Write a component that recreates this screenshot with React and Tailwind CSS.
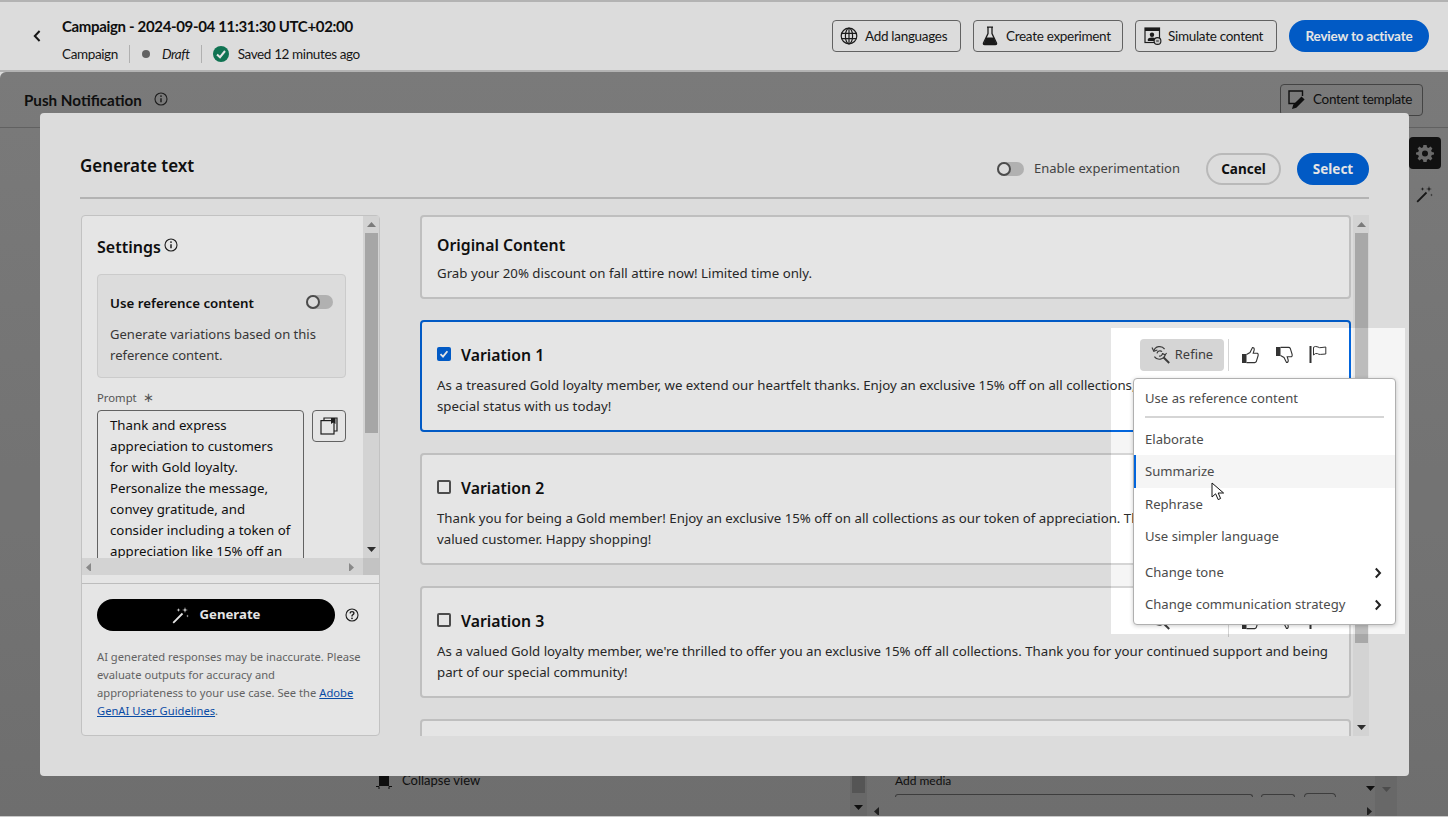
import React from "react";

const Globe = () => (
  <svg width="18" height="18" viewBox="0 0 18 18" fill="none" stroke="#1f1f1f" strokeWidth="1.2">
    <circle cx="9" cy="9" r="7.8" />
    <ellipse cx="9" cy="9" rx="3.6" ry="7.8" />
    <path d="M9 1.2V16.8M1.6 6.3H16.4M1.6 11.7H16.4" />
  </svg>
);
const Flask = () => (
  <svg width="16" height="20" viewBox="0 0 16 20">
    <path d="M5 1.2H11M6 1.5V7.5L1.5 17Q1 18.6 2.6 18.6H13.4Q15 18.6 14.5 17L10 7.5V1.5" fill="none" stroke="#1f1f1f" strokeWidth="1.3" />
    <path d="M4.2 11.5H11.8L14.6 18.6H1.4Z" fill="#1f1f1f" />
  </svg>
);
const Simulate = () => (
  <svg width="18" height="18" viewBox="0 0 18 18" fill="none">
    <rect x="1" y="1" width="14.5" height="14.5" stroke="#1f1f1f" strokeWidth="1.2" />
    <rect x="1" y="1" width="14.5" height="3" fill="#1f1f1f" />
    <circle cx="8" cy="7.8" r="2.2" fill="#1f1f1f" />
    <path d="M3.8 14V12.6Q4 10.8 8 10.6Q10.6 10.7 11.3 11.5L11 14Z" fill="#1f1f1f" />
    <circle cx="13.5" cy="14" r="3.4" fill="#dfdfdf" stroke="#1f1f1f" strokeWidth="1.1" />
    <path d="M12.2 14H14.8" stroke="#1f1f1f" />
  </svg>
);
const TemplateIcon = () => (
  <svg width="18" height="20" viewBox="0 0 18 20" fill="none">
    <path d="M9 13.5H1V1H14.5V6" stroke="#111" strokeWidth="1.4" />
    <path d="M4 19L5.2 14.8L13.5 6.5L16.6 9.6L8.3 17.8Z" fill="#111" />
  </svg>
);
const Info = ({ size = 14, color = "#222" }) => (
  <svg width={size} height={size} viewBox="0 0 14 14" fill="none" stroke={color} strokeWidth="1.1">
    <circle cx="7" cy="7" r="6" />
    <path d="M7 6.2V10.2" strokeWidth="1.5" />
    <circle cx="7" cy="4.1" r="0.9" fill={color} stroke="none" />
  </svg>
);
const Help = () => (
  <svg width="14" height="14" viewBox="0 0 14 14" fill="none" stroke="#222" strokeWidth="1.1">
    <circle cx="7" cy="7" r="6" />
    <path d="M5.1 5.4Q5.2 3.6 7 3.6Q8.9 3.6 8.9 5.2Q8.9 6.2 7.6 6.9Q7 7.2 7 8.4" strokeWidth="1.4" />
    <circle cx="7" cy="10.3" r="0.9" fill="#222" stroke="none" />
  </svg>
);
const Wand = ({ color = "#fff", size = 18 }) => (
  <svg width={size} height={size} viewBox="0 0 18 18" fill="none">
    <path d="M1.2 16.8L10.5 7.5" stroke={color} strokeWidth="1.8" />
    <path d="M13 1L13.6 3.4L16 4L13.6 4.6L13 7L12.4 4.6L10 4L12.4 3.4Z M6.5 2L6.9 3.6L8.5 4L6.9 4.4L6.5 6L6.1 4.4L4.5 4L6.1 3.6Z M15.5 8.5L15.8 9.7L17 10L15.8 10.3L15.5 11.5L15.2 10.3L14 10L15.2 9.7Z" fill={color} />
  </svg>
);
const Gear = () => (
  <svg width="18" height="18" viewBox="0 0 18 18">
    <path fillRule="evenodd" d="M7.4 1H10.6L11 3.2L12.6 3.9L14.5 2.6L16.4 4.5L15.1 6.4L15.8 8L18 8.4V10.6L15.8 11L15.1 12.6L16.4 14.5L14.5 16.4L12.6 15.1L11 15.8L10.6 18H7.4L7 15.8L5.4 15.1L3.5 16.4L1.6 14.5L2.9 12.6L2.2 11L0 10.6V8.4L2.2 8L2.9 6.4L1.6 4.5L3.5 2.6L5.4 3.9L7 3.2Z M9 6.4A3 3 0 1 0 9 12.4A3 3 0 1 0 9 6.4Z" fill="#777" />
  </svg>
);
const CopyDoc = () => (
  <svg width="18" height="18" viewBox="0 0 18 18" fill="none" stroke="#222" strokeWidth="1.2">
    <path d="M4 3.5V1H17V14H14" />
    <rect x="1" y="3.6" width="13" height="13.4" />
    <path d="M11 1H15.5V7L13.2 5.4L11 7Z" fill="#222" stroke="none" />
  </svg>
);
const RefineIcon = () => (
  <svg width="20" height="20" viewBox="0 0 20 20" fill="none" stroke="#3d3d3d" strokeWidth="1.2">
    <path d="M2.8 6.2A6 6 0 0 1 13.6 4.2" />
    <path d="M14.2 9.6A6 6 0 0 1 3.4 11.6" />
    <path d="M1 2.6L2.8 6.2L6.4 5M15.6 8L14.2 9.8L11.4 8.6" />
    <path d="M12.4 12.2L18.2 18" strokeWidth="2" />
    <path d="M6 8.4A3 3 0 0 1 11 6.6M11.6 8A3 3 0 0 1 8 11" />
  </svg>
);
const ThumbUp = () => (
  <svg width="18" height="18" viewBox="0 0 18 18" fill="none">
    <rect x="1" y="8" width="4.5" height="9" fill="#333" />
    <path d="M5.5 8.5L9 6.5L11.5 1.5Q13.5 1.5 13.2 4L12.2 7.3H16.4Q17.6 8 17 10L15.2 15.8Q14.8 16.6 13.6 16.6H5.5" stroke="#333" strokeWidth="1.1" />
  </svg>
);
const ThumbDown = () => (
  <svg width="18" height="18" viewBox="0 0 18 18" fill="none">
    <rect x="1" y="1" width="4.5" height="9" fill="#333" />
    <path d="M5.5 1.4H13.6Q14.8 1.4 15.2 2.2L17 8Q17.6 10 16.4 10.7H12.2L13.2 14Q13.5 16.5 11.5 16.5L9 11.5L5.5 9.5" stroke="#333" strokeWidth="1.1" />
  </svg>
);
const FlagIcon = () => (
  <svg width="18" height="20" viewBox="0 0 18 20" fill="none">
    <rect x="0.5" y="1" width="2" height="17" fill="#333" />
    <path d="M4.5 10V2.2Q6.5 0.8 9 2Q10.5 3 12 2.6L16.8 2V9L11.5 9.4Q9.8 9.6 8.5 8.6Q6.5 7.8 4.5 10Z" stroke="#333" strokeWidth="1" />
  </svg>
);
const Cursor = () => (
  <svg width="14" height="19" viewBox="0 0 14 19">
    <path d="M1 1V15L4.6 11.8L7.2 17.6L9.6 16.5L7.2 11H12.6Z" fill="#fff" stroke="#111" strokeWidth="1" />
  </svg>
);
const Chevron = () => (
  <svg width="8" height="12" viewBox="0 0 8 12" fill="none">
    <path d="M1.8 1.5L6 6L1.8 10.5" stroke="#222" strokeWidth="2" />
  </svg>
);
const Arrow = ({ d = "up", c = "#555" }) => {
  const p = { up: "M4.5 1L9 6H0Z", down: "M0 1H9L4.5 6Z", left: "M6 0V9L1 4.5Z", right: "M1 0V9L6 4.5Z" }[d];
  return (
    <svg width="9" height="9" viewBox="0 0 9 7">
      <path d={p} fill={c} />
    </svg>
  );
};

const OutlineBtn = ({ icon, children, cls }) => (
  <button className={`flex h-8 items-center rounded border border-[#6e6e6e] text-[13.5px] tracking-[-0.3px] text-[#1a1a1a] ${cls}`}>
    {icon}
    <span>{children}</span>
  </button>
);

const Toggle = () => (
  <span className="relative inline-block h-[14px] w-[27px] shrink-0 rounded-full bg-[#c6c6c6]">
    <span className="absolute left-0 top-0 h-[14px] w-[14px] rounded-full border-2 border-[#555] bg-[#f5f5f5]" />
  </span>
);

const Actions = ({ active }) => (
  <div className="flex items-center">
    <div className={`flex h-8 w-[84px] items-center justify-center gap-[4px] rounded ${active ? "bg-[#d5d5d5]" : ""}`}>
      <RefineIcon />
      <span className="text-[12.9px] text-[#3d3d3d]">Refine</span>
    </div>
    <div className="ml-[4px] h-8 w-px bg-[#d5d5d5]" />
    <div className="ml-[12px] flex w-[86px] items-center gap-[16px]">
      <ThumbUp />
      <ThumbDown />
      <FlagIcon />
    </div>
  </div>
);

const Variation = ({ title, lines, selected }) => (
  <div className={`h-[112px] shrink-0 rounded border-2 bg-white pl-[15px] pr-[22px] pt-[17px] ${selected ? "border-[#0265dc]" : "border-[#d5d5d5]"}`}>
    <div className="flex h-8 items-center justify-between">
      <div className="flex items-center gap-[10px]">
        {selected ? (
          <span className="-mt-[3px] flex h-[14px] w-[14px] items-center justify-center rounded-[2px] bg-[#0265dc]">
            <svg width="10" height="10" viewBox="0 0 10 10" fill="none">
              <path d="M1.5 5.2L4 7.6L8.4 2.2" stroke="#fff" strokeWidth="1.8" />
            </svg>
          </span>
        ) : (
          <span className="-mt-[3px] h-[14px] w-[14px] rounded-[2px] border-2 border-[#555]" />
        )}
        <span className="pt-[2px] text-[15.8px] font-semibold text-[#111]">{title}</span>
      </div>
      <Actions active={selected} />
    </div>
    <div className="mt-[4px] text-[13.25px] leading-[21px] text-[#2c2c2c]">
      {lines.map((l) => (
        <div key={l} className="whitespace-nowrap">{l}</div>
      ))}
    </div>
  </div>
);

const MenuItem = ({ children, h, hover, chevron }) => (
  <div className={`flex items-center justify-between pr-[13px] text-[13.1px] text-[#4b4b4b] ${h} ${hover ? "border-l-2 border-[#0265dc] bg-[#f5f5f5] pl-[9px]" : "pl-[11px] pt-[2px]"}`}>
    <span>{children}</span>
    {chevron && <Chevron />}
  </div>
);

export default function App() {
  return (
    <div className="relative flex h-[817px] w-full flex-col overflow-hidden bg-[#f5f5f5] font-['Noto_Sans',sans-serif]">
      {/* top bar */}
      <header className="flex h-[72px] shrink-0 items-center justify-between border-t-2 border-b-2 border-[#c8c8c8] bg-[#f5f5f5] pl-[32px] pr-[19px] font-['Lato',sans-serif]">
        <div className="flex items-center">
          <svg width="10" height="14" viewBox="0 0 10 14" fill="none">
            <path d="M7.6 2L2.8 7L7.6 12" stroke="#1a1a1a" strokeWidth="2" />
          </svg>
          <div className="ml-5 mt-[8px]">
            <div className="text-[15px] font-bold leading-5 tracking-[-0.34px] text-[#111]">Campaign - 2024-09-04 11:31:30 UTC+02:00</div>
            <div className="mt-[8px] flex h-[20px] items-center text-[13.5px] tracking-[-0.38px] text-[#1a1a1a]">
              <span>Campaign</span>
              <span className="mx-[11px] h-[18px] w-px bg-[#c4c4c4]" />
              <span className="ml-[1px] h-2 w-2 rounded-full bg-[#6e6e6e]" />
              <span className="ml-3 italic">Draft</span>
              <span className="mx-[11px] h-[18px] w-px bg-[#c4c4c4]" />
              <svg width="16" height="16" viewBox="0 0 16 16">
                <circle cx="8" cy="8" r="8" fill="#12805c" />
                <path d="M4 8.4L7 11.2L12 5" stroke="#fff" strokeWidth="2" fill="none" />
              </svg>
              <span className="ml-[9px]">Saved 12 minutes ago</span>
            </div>
          </div>
        </div>
        <div className="flex items-center gap-3">
          <OutlineBtn icon={<Globe />} cls="w-[129px] gap-[7px] pl-[7px]">Add languages</OutlineBtn>
          <OutlineBtn icon={<Flask />} cls="w-[150px] gap-[8px] pl-[8px]">Create experiment</OutlineBtn>
          <OutlineBtn icon={<Simulate />} cls="w-[142px] gap-[6px] pl-[8px]">Simulate content</OutlineBtn>
          <button className="h-8 w-[140px] rounded-full bg-[#0265dc] text-[13.5px] font-bold tracking-[-0.2px] text-white">Review to activate</button>
        </div>
      </header>

      {/* page behind the dialog */}
      <main className="flex min-h-0 flex-1 flex-col rounded-tl-md border-b border-[#e0e0e0] bg-gradient-to-b from-[#888888] to-[#7b7b7b] font-['Lato',sans-serif]">
        <div className="flex h-[56px] shrink-0 items-center justify-between border-b border-[#6d6d6d] pl-6 pr-[25px]">
          <div className="flex items-center gap-[12px]">
            <span className="pt-[2px] text-[15.2px] font-bold text-[#111]">Push Notification</span>
            <Info />
          </div>
          <button className="flex h-8 w-[143px] items-center gap-[7px] rounded border border-[#4c4c4c] pl-[7px] text-[13.5px] tracking-[-0.3px] text-[#111]">
            <TemplateIcon />
            Content template
          </button>
        </div>
        <div className="flex min-h-0 flex-1 flex-col items-end pr-[7px] pt-[9px]">
          <div className="flex h-8 w-8 items-center justify-center rounded bg-[#141414]">
            <Gear />
          </div>
          <div className="mr-[7px] mt-[16px]">
            <Wand color="#1a1a1a" size={18} />
          </div>
        </div>
        <div className="flex h-[44px] shrink-0 items-start pl-[376px] text-[13px] text-[#111]">
          <div className="flex h-[18px] w-[105px] shrink-0 items-center gap-[10px]">
            <svg width="16" height="16" viewBox="0 0 16 16">
              <rect x="3" y="3" width="10" height="10" fill="#111" />
              <path d="M0 2.5H3V0M13 0V2.5H16M0 13.5H3V16M13 16V13.5H16" stroke="#111" fill="none" />
            </svg>
            <span>Collapse view</span>
          </div>
          <div className="ml-[369px] mt-[4px] flex h-[40px] w-[17px] shrink-0 flex-col items-center bg-[#747474]">
            <div className="h-[17px] w-[13px] bg-[#5f5f5f]" />
            <div className="flex-1" />
            <div className="flex h-[18px] items-center"><Arrow d="down" c="#111" /></div>
          </div>
          <div className="ml-[28px] flex h-[44px] w-[480px] shrink-0 flex-col">
            <div className="flex h-[18px] items-center justify-between text-[12px] text-[#111]">
              <span>Add media</span>
              <span className="mt-[14px]"><Arrow d="down" c="#111" /></span>
            </div>
            <div className="mt-[4px] flex">
              <div className="h-[3px] w-[358px] rounded-t border-x border-t border-[#444]" />
              <div className="ml-[8px] h-[3px] w-[34px] rounded-t border-x border-t border-[#444]" />
              <div className="ml-[9px] h-[4px] w-[32px] -translate-y-px rounded-t border-x border-t border-[#444]" />
            </div>
            <div className="-ml-[22px] mt-[6px] flex h-[12px] w-[502px] items-center justify-between">
              <Arrow d="left" c="#222" />
              <Arrow d="right" c="#222" />
            </div>
          </div>
          <div className="mt-[4px] flex h-[40px] w-[22px] shrink-0 justify-center bg-[#747474] pt-[9px]">
            <Arrow d="down" c="#555" />
          </div>
        </div>
      </main>

      {/* dialog */}
      <section className="absolute left-[40px] top-[113px] flex h-[663px] w-[1369px] flex-col rounded bg-[#f5f5f5] px-[40px]">
        <div className="flex h-[86px] shrink-0 items-center justify-between border-b-2 border-[#c8c8c8] pt-[24px]">
          <h1 className="-mt-[2px] text-[17px] font-semibold text-[#111]">Generate text</h1>
          <div className="flex items-center pt-[4px]">
            <Toggle />
            <span className="ml-[10px] text-[13px] text-[#4b4b4b]">Enable experimentation</span>
            <button className="ml-[26px] h-8 w-[75px] rounded-full border-2 border-[#cfcfcf] text-[13.5px] font-bold text-[#111]">Cancel</button>
            <button className="ml-4 h-8 w-[72px] rounded-full bg-[#0265dc] text-[13.5px] font-bold text-white">Select</button>
          </div>
        </div>

        <div className="mt-[16px] flex min-h-0 flex-1 items-start">
          {/* settings */}
          <aside className="ml-px flex h-[521px] w-[299px] shrink-0 flex-col rounded border border-[#d8d8d8] bg-white">
            <div className="flex h-[342px] shrink-0">
              <div className="h-full w-[281px] overflow-hidden pl-[15px]">
                <div className="flex h-[58px] items-center pt-[3px]">
                  <span className="text-[16px] font-semibold text-[#111]">Settings</span>
                  <span className="ml-[3px] -mt-[4px]"><Info size={14} /></span>
                </div>
                <div className="h-[104px] w-[249px] rounded border border-[#e2e2e2] bg-[#f5f5f5] px-3">
                  <div className="flex h-[54px] items-center justify-between pt-[4px]">
                    <span className="text-[13.3px] font-semibold text-[#111]">Use reference content</span>
                    <span className="-mt-[2px]"><Toggle /></span>
                  </div>
                  <p className="-mt-[5px] text-[13.05px] leading-[21px] text-[#3d3d3d]">Generate variations based on this reference content.</p>
                </div>
                <div className="mt-[10px] flex h-[20px] items-center gap-[6px] text-[11.3px] text-[#5e5e5e]">
                  <span>Prompt</span>
                  <span className="text-[13px]">∗</span>
                </div>
                <div className="mt-[2px] flex w-[249px] items-start gap-2">
                  <div className="h-[170px] w-[207px] shrink-0 overflow-hidden rounded-t border border-[#6e6e6e] pl-3 pt-[4px] text-[13.25px] leading-[21px] text-[#111]">
                    <div className="whitespace-nowrap">Thank and express</div>
                    <div className="whitespace-nowrap">appreciation to customers</div>
                    <div className="whitespace-nowrap">for with Gold loyalty.</div>
                    <div className="whitespace-nowrap">Personalize the message,</div>
                    <div className="whitespace-nowrap">convey gratitude, and</div>
                    <div className="whitespace-nowrap">consider including a token of</div>
                    <div className="whitespace-nowrap">appreciation like 15% off an</div>
                  </div>
                  <button className="flex h-8 w-[34px] shrink-0 items-center justify-center rounded border border-[#6e6e6e]">
                    <CopyDoc />
                  </button>
                </div>
              </div>
              <div className="flex h-full w-[16px] flex-col items-center bg-[#ebebeb]">
                <div className="flex h-[17px] items-center"><Arrow d="up" c="#8a8a8a" /></div>
                <div className="h-[200px] w-[13px] bg-[#b9b9b9]" />
                <div className="flex-1" />
                <div className="flex h-[17px] items-center"><Arrow d="down" c="#333" /></div>
              </div>
            </div>
            <div className="flex h-[17px] shrink-0 bg-[#ebebeb]">
              <div className="flex flex-1 items-center justify-between pl-[3px] pr-[6px]">
                <Arrow d="left" c="#999" />
                <Arrow d="right" c="#999" />
              </div>
              <div className="w-[16px] bg-[#dadada]" />
            </div>
            <div className="mt-[8px] flex-1 border-t border-[#d2d2d2] px-[15px] pt-[15px]">
              <div className="flex items-center">
                <button className="flex h-8 w-[238px] items-center justify-center gap-[10px] rounded-full bg-black text-[13.2px] font-bold text-white">
                  <Wand />
                  Generate
                </button>
                <span className="ml-[10px]"><Help /></span>
              </div>
              <p className="mt-[17px] w-[265.5px] text-[11.2px] leading-[18px] text-[#6e6e6e]">
                AI generated responses may be inaccurate. Please evaluate outputs for accuracy and appropriateness to your use case. See the{" "}
                <a className="text-[#0b54b8] underline">Adobe GenAI User Guidelines</a>.
              </p>
            </div>
          </aside>

          {/* variations */}
          <div className="ml-[40px] flex h-[521px] w-[949px] shrink-0 gap-[2px]">
            <div className="flex h-full w-[931px] shrink-0 flex-col gap-[21px] overflow-hidden">
              <div className="h-[84px] shrink-0 rounded border-2 border-[#d5d5d5] bg-white pl-[15px] pt-[16px]">
                <div className="text-[15.8px] font-semibold leading-6 text-[#111]">Original Content</div>
                <div className="mt-[6px] text-[13.25px] leading-[21px] text-[#2c2c2c]">Grab your 20% discount on fall attire now! Limited time only.</div>
              </div>
              <Variation
                selected
                title="Variation 1"
                lines={["As a treasured Gold loyalty member, we extend our heartfelt thanks. Enjoy an exclusive 15% off on all collections,", "special status with us today!"]}
              />
              <Variation
                title="Variation 2"
                lines={["Thank you for being a Gold member! Enjoy an exclusive 15% off on all collections as our token of appreciation. Thanks for being a", "valued customer. Happy shopping!"]}
              />
              <Variation
                title="Variation 3"
                lines={["As a valued Gold loyalty member, we're thrilled to offer you an exclusive 15% off all collections. Thank you for your continued support and being", "part of our special community!"]}
              />
              <div className="h-[112px] shrink-0 rounded border-2 border-[#d5d5d5] bg-white" />
            </div>
            <div className="flex h-full w-[16px] flex-col items-center bg-[#ebebeb]">
              <div className="flex h-[18px] items-center"><Arrow d="up" c="#8a8a8a" /></div>
              <div className="h-[410px] w-[13px] bg-[#bcbcbc]" />
              <div className="flex-1" />
              <div className="flex h-[18px] items-center"><Arrow d="down" c="#333" /></div>
            </div>
          </div>
        </div>
      </section>

      {/* spotlight with its menu */}
      <div className="absolute left-[1111px] top-[328px] h-[306px] w-[294px] shadow-[0_0_0_2000px_rgba(0,0,0,0.1)]">
        <div className="absolute left-[22px] top-[50px] flex h-[247px] w-[263px] flex-col rounded border border-[#b0b0b0] bg-white pt-[3px] shadow-[0_1px_4px_rgba(0,0,0,0.2)]">
          <MenuItem h="h-[32px] shrink-0">Use as reference content</MenuItem>
          <div className="mx-[11px] mb-[5px] mt-[2px] h-[2px] shrink-0 bg-[#d5d5d5]" />
          <MenuItem h="h-[32px] shrink-0">Elaborate</MenuItem>
          <MenuItem h="h-[33px] shrink-0" hover>Summarize</MenuItem>
          <MenuItem h="h-[32px] shrink-0">Rephrase</MenuItem>
          <MenuItem h="h-[32px] shrink-0">Use simpler language</MenuItem>
          <div className="h-[4px] shrink-0" />
          <MenuItem h="h-[32px] shrink-0" chevron>Change tone</MenuItem>
          <MenuItem h="h-[32px] shrink-0" chevron>Change communication strategy</MenuItem>
        </div>
        <div className="absolute left-[100px] top-[154px]">
          <Cursor />
        </div>
      </div>
    </div>
  );
}
